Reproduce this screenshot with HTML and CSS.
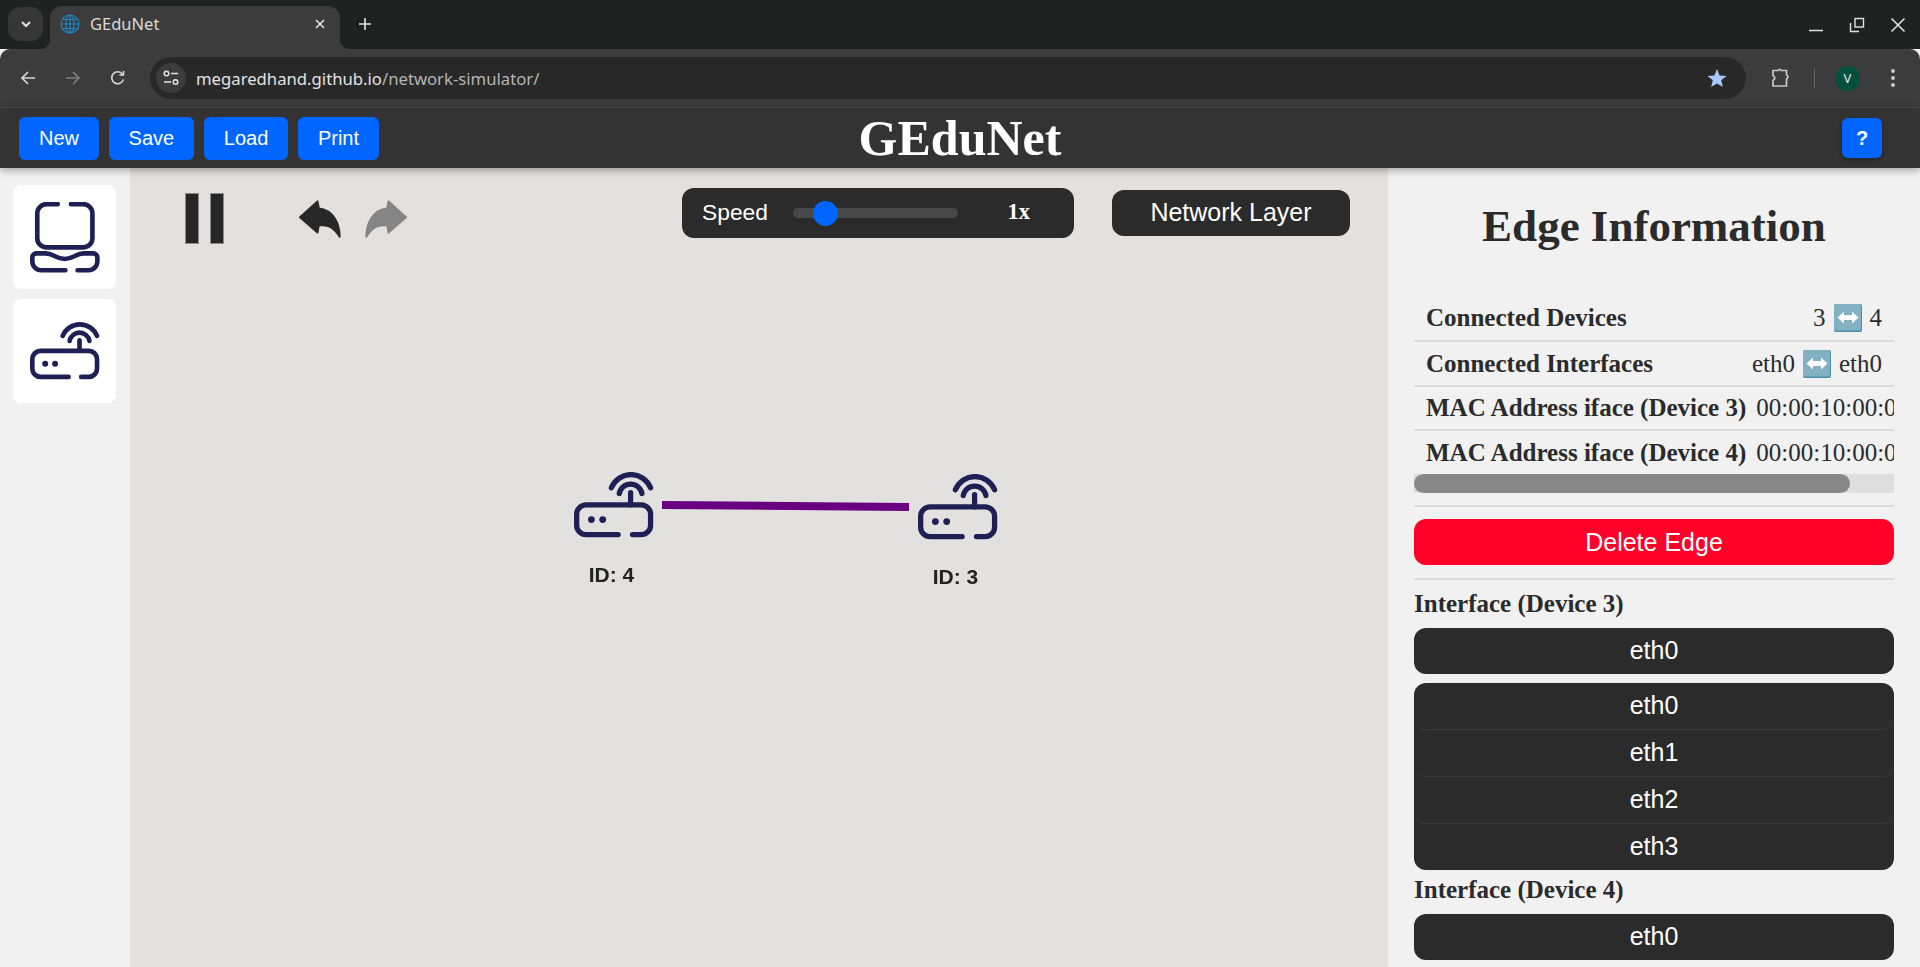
FILE: index.html
```html
<!DOCTYPE html>
<html lang="en">

<head>
    <meta charset="UTF-8" />
    <title>GEduNet</title>
    <link rel="stylesheet" href="styles.css">
</head>

<body>
    <svg class="defs" width="0" height="0">
        <symbol id="router" viewBox="88 455 212 175">
            <g fill="none" stroke="currentColor" stroke-width="14" stroke-linecap="round">
                <path d="M205 621 H120 a25 25 0 0 1 -25 -25 V567 a25 25 0 0 1 25 -25 H266 a25 25 0 0 1 25 25 V596 a25 25 0 0 1 -25 25 H243" />
                <path d="M238 542 V510" />
                <path d="M208 512 A30.5 30.5 0 0 1 268 512" />
                <path d="M187 497 A56 56 0 0 1 291 497" />
            </g>
            <circle cx="134" cy="581" r="9" fill="currentColor" />
            <circle cx="164" cy="581" r="9" fill="currentColor" />
        </symbol>
        <symbol id="laptop" viewBox="88 95 212 214">
            <g fill="none" stroke="currentColor" stroke-width="14" stroke-linecap="round">
                <path d="M172 101 H138 a28 28 0 0 0 -28 28 V204 a28 28 0 0 0 28 28 H249 a28 28 0 0 0 28 -28 V129 a28 28 0 0 0 -28 -28 H212" />
                <path d="M195 301 H122 a27 27 0 0 1 -27 -27 V262 a12 12 0 0 1 12 -12 H135 C160 250 165 267 193 267 C221 267 226 250 251 250 H280 a12 12 0 0 1 12 12 V274 a27 27 0 0 1 -27 27 H232" />
            </g>
        </symbol>
        <symbol id="undo" viewBox="890 85 140 125">
            <path d="M902 142 L954 95 L958 116 C1000 120 1020 160 1020 200 C1000 170 985 165 958 165 L954 188 Z" fill="currentColor" stroke="currentColor" stroke-width="6" stroke-linejoin="round" />
        </symbol>
        <symbol id="swap" viewBox="0 0 28 28">
            <rect width="28" height="28" rx="2" fill="#4d8ea6" />
            <rect width="27" height="26.5" rx="2" fill="#83b1c4" />
            <path d="M3.5 13.5 L10 7.5 V11 H18 V7.5 L24.5 13.5 L18 19.5 V16 H10 V19.5 Z" fill="#fff" />
        </symbol>
    </svg>

    <div class="tabstrip">
        <div class="tab-menu">
            <svg width="14" height="14" viewBox="0 0 14 14"><path d="M3 5 L7 9 L11 5" fill="none" stroke="#e3e3e3" stroke-width="2" /></svg>
        </div>
        <div class="tab">
            <svg width="20" height="20" viewBox="0 0 20 20" fill="none" stroke="#1f86c4" stroke-width="1.2">
                <circle cx="10" cy="10" r="9" />
                <ellipse cx="10" cy="10" rx="4" ry="9" />
                <path d="M1 10 H19 M2.5 5.5 H17.5 M2.5 14.5 H17.5 M10 1 V19" />
            </svg>
            <span class="tab-title">GEduNet</span>
            <svg width="12" height="12" viewBox="0 0 12 12"><path d="M2 2 L10 10 M10 2 L2 10" stroke="#e3e3e3" stroke-width="1.6" /></svg>
        </div>
        <svg class="tab-new" width="14" height="14" viewBox="0 0 14 14"><path d="M7 1 V13 M1 7 H13" stroke="#e3e3e3" stroke-width="1.6" /></svg>
        <div class="win-controls">
            <svg width="16" height="16" viewBox="0 0 16 16"><path d="M1 13.5 H15" stroke="#e3e3e3" stroke-width="1.5" /></svg>
            <svg width="16" height="16" viewBox="0 0 16 16" fill="none" stroke="#e3e3e3" stroke-width="1.4"><rect x="6" y="1.5" width="8.5" height="8.5" /><path d="M1.5 6 V14.5 H10" /></svg>
            <svg width="16" height="16" viewBox="0 0 16 16"><path d="M1.5 1.5 L14.5 14.5 M14.5 1.5 L1.5 14.5" stroke="#e3e3e3" stroke-width="1.5" /></svg>
        </div>
    </div>

    <div class="toolbar">
        <div class="nav-icons">
            <svg width="16" height="16" viewBox="0 0 16 16" fill="none" stroke="#d6d6d6" stroke-width="1.7"><path d="M15 8 H2 M8 2 L2 8 L8 14" /></svg>
            <svg width="16" height="16" viewBox="0 0 16 16" fill="none" stroke="#7d7d7d" stroke-width="1.7"><path d="M1 8 H14 M8 2 L14 8 L8 14" /></svg>
            <svg width="16" height="16" viewBox="0 0 16 16" fill="none" stroke="#d6d6d6" stroke-width="1.6"><path d="M13.5 9.5 A6 6 0 1 1 12.5 4 M13.5 1 V5 H9.5" /></svg>
        </div>
        <div class="omnibox">
            <div class="site-info">
                <svg width="16" height="16" viewBox="0 0 16 16" fill="none" stroke="#e3e3e3" stroke-width="1.5"><circle cx="3.5" cy="3.5" r="2.3" /><path d="M8 3.5 H15 M1 12 H8" /><circle cx="12.5" cy="12" r="2.3" /></svg>
            </div>
            <span class="url"><span class="url-host">megaredhand.github.io</span>/network-simulator/</span>
            <svg class="star" width="20" height="20" viewBox="0 0 20 20"><path d="M10 1 L12.6 7.4 L19.5 7.9 L14.2 12.3 L15.9 19 L10 15.4 L4.1 19 L5.8 12.3 L0.5 7.9 L7.4 7.4 Z" fill="#a8c7fa" /></svg>
        </div>
        <div class="tool-icons">
            <svg width="20" height="20" viewBox="0 0 20 20" fill="none" stroke="#c8c8c8" stroke-width="1.7"><path d="M2 2.5 H7 Q8.5 0 10 2.5 H15.5 V7 Q18.5 8.5 15.5 11 V18 H2 V12.5 Q5.5 10 2 7.5 Z" /></svg>
            <div class="tool-divider"></div>
            <div class="avatar">V</div>
            <svg class="kebab" width="6" height="20" viewBox="0 0 6 20" fill="#c8c8c8"><circle cx="3" cy="3" r="2" /><circle cx="3" cy="10" r="2" /><circle cx="3" cy="17" r="2" /></svg>
        </div>
    </div>

    <header class="app-header">
        <div class="header-buttons">
            <button class="blue-btn">New</button>
            <button class="blue-btn">Save</button>
            <button class="blue-btn">Load</button>
            <button class="blue-btn">Print</button>
        </div>
        <h1 class="app-title">GEduNet</h1>
        <button class="help-btn">?</button>
    </header>

    <main class="workspace">
        <aside class="sidebar">
            <div class="tile"><svg class="tile-icon" width="70" height="71"><use href="#laptop" /></svg></div>
            <div class="tile"><svg class="tile-icon" width="70" height="58"><use href="#router" /></svg></div>
        </aside>

        <section class="canvas-area">
            <div class="graph">
                <svg class="edges" width="1258" height="799">
                    <line x1="532" y1="337" x2="779" y2="339" stroke="#690082" stroke-width="8" />
                </svg>
                <div class="node node-4">
                    <svg class="node-icon" width="80" height="66"><use href="#router" /></svg>
                    <span class="node-label">ID: 4</span>
                </div>
                <div class="node node-3">
                    <svg class="node-icon" width="80" height="66"><use href="#router" /></svg>
                    <span class="node-label">ID: 3</span>
                </div>
            </div>

            <div class="canvas-tools">
                <div class="pause"><span></span><span></span></div>
                <svg class="undo" width="47" height="42"><use href="#undo" /></svg>
                <svg class="redo" width="47" height="42"><use href="#undo" /></svg>
                <div class="speed">
                    <span>Speed</span>
                    <div class="slider"><div class="thumb"></div></div>
                    <b>1x</b>
                </div>
                <div class="layer">Network Layer</div>
            </div>
        </section>

        <aside class="info-panel">
            <h2 class="info-title">Edge Information</h2>
            <div class="info-scroll">
                <div class="info-row row-first">
                    <b>Connected Devices</b>
                    <span class="val">3 <svg class="swap" width="28" height="28"><use href="#swap" /></svg> 4</span>
                </div>
                <div class="info-row row-tall">
                    <b>Connected Interfaces</b>
                    <span class="val">eth0 <svg class="swap" width="28" height="28"><use href="#swap" /></svg> eth0</span>
                </div>
                <div class="info-row">
                    <b>MAC Address iface (Device 3)</b>
                    <span class="val">00:00:10:00:00:03</span>
                </div>
                <div class="info-row row-last">
                    <b>MAC Address iface (Device 4)</b>
                    <span class="val">00:00:10:00:00:04</span>
                </div>
            </div>
            <div class="scrollbar"><div class="scrollbar-thumb"></div></div>
            <hr class="rule">
            <button class="delete-btn">Delete Edge</button>
            <hr class="rule rule-after-delete">
            <h3 class="iface-label">Interface (Device 3)</h3>
            <div class="dark-select">eth0</div>
            <ul class="dark-list">
                <li>eth0</li>
                <li>eth1</li>
                <li>eth2</li>
                <li>eth3</li>
            </ul>
            <h3 class="iface-label">Interface (Device 4)</h3>
            <div class="dark-select">eth0</div>
        </aside>
    </main>
</body>

</html>
```

FILE: styles.css
```css
* {
    box-sizing: border-box;
}

html,
body {
    margin: 0;
    height: 967px;
    overflow: hidden;
}

body {
    display: flex;
    flex-direction: column;
    font-family: "Liberation Sans", sans-serif;
    background-color: #f1f1f1;
}

.defs {
    position: absolute;
}

/* browser chrome */
.tabstrip {
    height: 49px;
    flex: none;
    display: flex;
    align-items: flex-start;
    background-color: #202221;
    padding-left: 8px;
}

.tab-menu {
    width: 35px;
    height: 34px;
    margin-top: 7px;
    border-radius: 12px;
    background-color: #363636;
    display: flex;
    align-items: center;
    justify-content: center;
}

.tab {
    position: relative;
    width: 290px;
    height: 43px;
    margin-top: 6px;
    margin-left: 7px;
    padding: 0 14px 7px 10px;
    display: flex;
    align-items: center;
    border-radius: 12px 12px 0 0;
    background-color: #3c3c3c;
}

.tab::before,
.tab::after {
    content: "";
    position: absolute;
    bottom: 0;
    width: 10px;
    height: 10px;
}

.tab::before {
    left: -10px;
    background: radial-gradient(circle at 0 0, transparent 10px, #3c3c3c 10.5px);
}

.tab::after {
    right: -10px;
    background: radial-gradient(circle at 100% 0, transparent 10px, #3c3c3c 10.5px);
}

.tab-title {
    flex: 1;
    margin: -2px 0 0 10px;
    font-family: "Noto Sans", sans-serif;
    font-size: 16.5px;
    color: #d8d8d8;
}

.tab-new {
    margin: 17px 0 0 18px;
}

.win-controls {
    margin-left: auto;
    margin-top: 17px;
    padding-right: 14px;
    display: flex;
    gap: 25px;
}

.toolbar {
    height: 59px;
    flex: none;
    display: flex;
    align-items: center;
    padding-right: 24px;
    background-color: #3c3c3c;
    border-bottom: 1px solid #4c4c4c;
    border-radius: 10px 10px 0 0;
}

.nav-icons {
    width: 150px;
    padding-left: 20px;
    display: flex;
    gap: 29px;
}

.omnibox {
    width: 1596px;
    height: 42px;
    margin-top: -1px;
    padding: 0 19px 0 6px;
    display: flex;
    align-items: center;
    border-radius: 21px;
    background-color: #282828;
}

.site-info {
    width: 30px;
    height: 30px;
    border-radius: 50%;
    background-color: #3c3c3c;
    display: flex;
    align-items: center;
    justify-content: center;
}

.url {
    flex: 1;
    margin: 2px 0 0 10px;
    font-family: "Noto Sans", sans-serif;
    font-size: 16.7px;
    color: #b4b4b4;
}

.url-host {
    color: #e3e3e3;
}

.tool-icons {
    margin-left: 25px;
    display: flex;
    align-items: center;
}

.tool-divider {
    width: 1px;
    height: 20px;
    margin: 0 20px 0 23px;
    background-color: #666;
}

.avatar {
    width: 25px;
    height: 25px;
    border-radius: 50%;
    background-color: #04503f;
    color: #e3e3e3;
    font-family: "Noto Sans", sans-serif;
    font-size: 13px;
    line-height: 25px;
    text-align: center;
}

.kebab {
    margin-left: 30px;
}

/* app header */
.app-header {
    position: relative;
    z-index: 2;
    height: 60px;
    flex: none;
    display: grid;
    grid-template-columns: 1fr auto 1fr;
    align-items: center;
    padding: 0 19px;
    background-color: #333;
    box-shadow: 0 2px 8px rgba(0, 0, 0, 0.35);
}

.header-buttons {
    display: flex;
    gap: 9.6px;
}

.blue-btn {
    height: 43px;
    padding: 0 20px;
    border: none;
    border-radius: 6px;
    background-color: #0066ff;
    color: #fff;
    font-family: "Liberation Sans", sans-serif;
    font-size: 20px;
}

.app-title {
    margin: 0;
    color: #fff;
    font-family: "Liberation Serif", serif;
    font-size: 50px;
    font-weight: bold;
}

.help-btn {
    justify-self: end;
    width: 40px;
    height: 40px;
    margin-right: 19px;
    border: none;
    border-radius: 6px;
    background-color: #0066ff;
    color: #fff;
    font-family: "Liberation Sans", sans-serif;
    font-size: 20px;
    font-weight: bold;
    box-shadow: 0 2px 5px rgba(0, 0, 0, 0.3);
}

/* main area */
.workspace {
    flex: 1;
    min-height: 0;
    display: flex;
}

.sidebar {
    width: 130px;
    flex: none;
    padding: 17px 0 0 13px;
    display: flex;
    flex-direction: column;
    gap: 10px;
    background-color: #f1f1f1;
}

.tile {
    width: 103px;
    height: 104px;
    border-radius: 8px;
    background-color: #fff;
    display: flex;
    align-items: center;
    justify-content: center;
    color: #1e2054;
}

.canvas-area {
    position: relative;
    width: 1258px;
    flex: none;
    background-color: #e2e1df;
}

.graph {
    position: absolute;
    top: 0;
    left: 0;
    width: 100%;
    height: 100%;
    filter: blur(0.5px);
}

.edges {
    display: block;
}

.node {
    position: absolute;
    width: 80px;
    display: flex;
    flex-direction: column;
    align-items: center;
    color: #1e2054;
}

.node-4 {
    left: 444px;
    top: 304px;
}

.node-3 {
    left: 788px;
    top: 306px;
}

.node-label {
    margin: 25px 5px 0 0;
    color: #222;
    font-size: 21px;
    font-weight: bold;
    line-height: 24px;
}

.canvas-tools {
    position: relative;
    display: flex;
    align-items: flex-start;
    padding: 20px 0 0 55px;
}

.pause {
    display: flex;
    gap: 11px;
    margin-top: 5px;
}

.pause span {
    width: 14px;
    height: 51px;
    background-color: #262626;
    border: 1px solid #8c8c8c;
}

.undo {
    margin: 10px 0 0 72px;
    color: #282828;
}

.redo {
    margin: 10px 0 0 20px;
    color: #858585;
    transform: scaleX(-1);
}

.speed {
    width: 392px;
    height: 50px;
    margin-left: 272px;
    padding: 0 44px 2px 20px;
    display: flex;
    align-items: center;
    border-radius: 12px;
    background-color: #2b2b2b;
    color: #fff;
    font-size: 22.8px;
}

.speed b {
    font-family: "Liberation Serif", serif;
    font-size: 22.5px;
    margin-left: auto;
}

.slider {
    position: relative;
    width: 165px;
    height: 10px;
    margin: 2px 0 0 25px;
    border-radius: 5px;
    background-color: #484848;
}

.thumb {
    position: absolute;
    left: 20px;
    top: -7.5px;
    width: 25px;
    height: 25px;
    border-radius: 50%;
    background-color: #0066ff;
}

.layer {
    width: 238px;
    height: 46px;
    margin: 2px 0 0 38px;
    border-radius: 12px;
    background-color: #2b2b2b;
    color: #fff;
    font-size: 25px;
    line-height: 44px;
    text-align: center;
}

/* right panel */
.info-panel {
    flex: 1;
    padding: 35px 26px 0;
    color: #2b2b2b;
    font-family: "Liberation Serif", serif;
    background-color: #f1f1f1;
}

.info-title {
    margin: 0 0 47px;
    font-size: 45px;
    line-height: 46px;
    text-align: center;
}

.info-scroll {
    overflow: hidden;
}

.info-row {
    width: 480px;
    height: 44px;
    padding: 0 12px;
    display: flex;
    justify-content: space-between;
    align-items: center;
    gap: 10px;
    white-space: nowrap;
    font-size: 25px;
    border-bottom: 2px solid #dcdcdc;
}

.row-first {
    height: 46px;
}

.row-tall {
    height: 45px;
}

.row-last {
    height: 43px;
    border-bottom: none;
}

.val {
    display: flex;
    align-items: center;
    gap: 8px;
}

.swap {
    flex: none;
}

.scrollbar {
    height: 19px;
    background-color: #dedede;
}

.scrollbar-thumb {
    width: 436px;
    height: 19px;
    border-radius: 10px;
    background-color: #888;
}

.rule {
    margin: 12px 0 12px;
    border: none;
    border-top: 2px solid #dcdcdc;
}

.rule-after-delete {
    margin: 13px 0 10px;
}

.delete-btn {
    display: block;
    width: 100%;
    height: 46px;
    border: none;
    border-radius: 12px;
    background-color: #ff0028;
    color: #fff;
    font-family: "Liberation Sans", sans-serif;
    font-size: 25px;
}

.iface-label {
    margin: 0;
    font-size: 25px;
    line-height: 28px;
}

.dark-select {
    height: 46px;
    margin-top: 10px;
    border-radius: 12px;
    background-color: #2b2b2b;
    color: #fff;
    font-family: "Liberation Sans", sans-serif;
    font-size: 25px;
    line-height: 44px;
    text-align: center;
}

.dark-list {
    list-style: none;
    margin: 9px 0 6px;
    padding: 0;
    border-radius: 12px;
    background-color: #2b2b2b;
    color: #fff;
    font-family: "Liberation Sans", sans-serif;
    font-size: 25px;
    text-align: center;
}

.dark-list li {
    height: 47px;
    line-height: 44px;
    border-bottom: 1px solid #3a3a3a;
    border-radius: 12px;
}

.dark-list li:last-child {
    height: 46px;
    border-bottom: none;
}
```
